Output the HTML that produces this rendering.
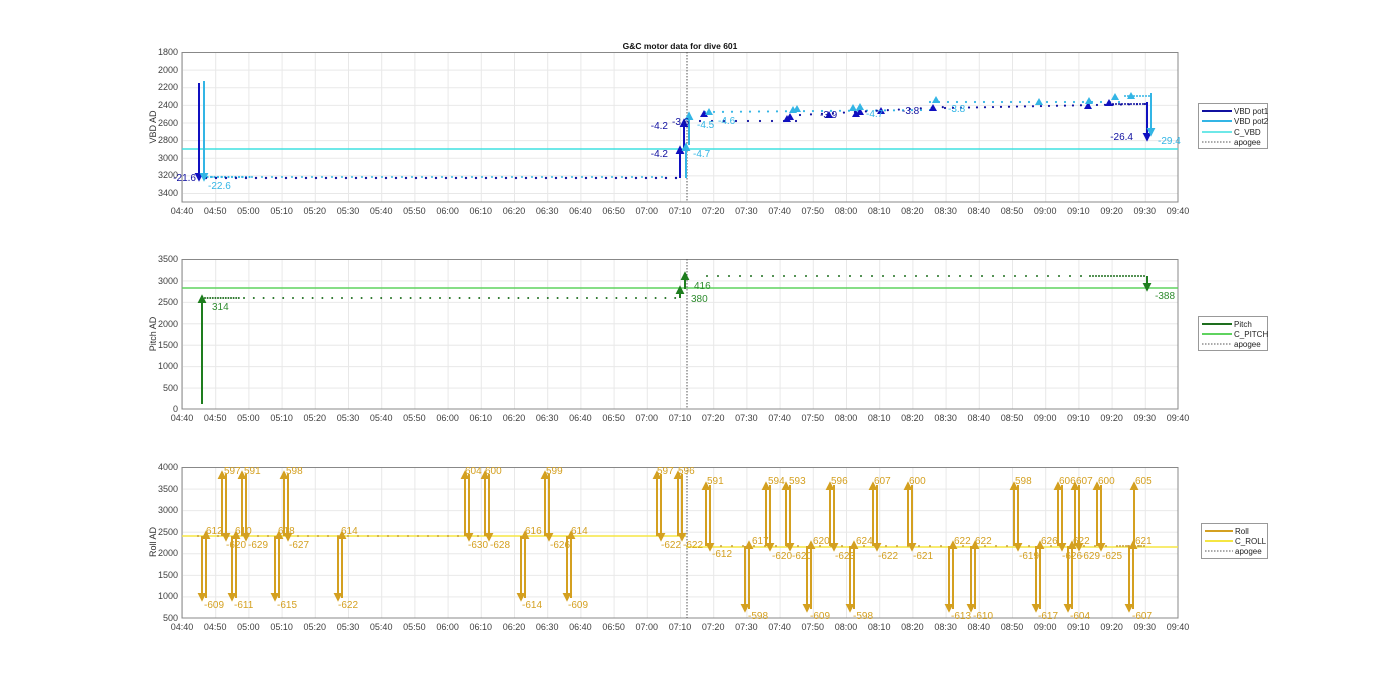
<!DOCTYPE html>
<html><head><meta charset="utf-8"><style>
html,body{margin:0;padding:0;background:#fff;}
svg{display:block;font-family:"Liberation Sans",Arial,sans-serif;}
.tk{font-size:9px;fill:#404040;}
.lg{font-size:8px;fill:#222;}
</style></head><body>
<svg width="1400" height="693" viewBox="0 0 1400 693" xmlns="http://www.w3.org/2000/svg">
<defs>
<pattern id="vg" x="182" y="0" width="33.2" height="700" patternUnits="userSpaceOnUse"><line x1="0.5" y1="0" x2="0.5" y2="700" stroke="#e8e8e8" stroke-width="1"/></pattern>
<pattern id="hg1" x="0" y="52" width="1400" height="17.625" patternUnits="userSpaceOnUse"><line x1="0" y1="0.5" x2="1400" y2="0.5" stroke="#e8e8e8"/></pattern>
<pattern id="hg2" x="0" y="409" width="1400" height="21.43" patternUnits="userSpaceOnUse"><line x1="0" y1="0.5" x2="1400" y2="0.5" stroke="#e8e8e8"/></pattern>
<pattern id="hg3" x="0" y="618" width="1400" height="21.57" patternUnits="userSpaceOnUse"><line x1="0" y1="0.5" x2="1400" y2="0.5" stroke="#e8e8e8"/></pattern>
<marker id="ab" viewBox="0 0 10 10" refX="5" refY="8" markerWidth="9" markerHeight="9" markerUnits="userSpaceOnUse" orient="auto"><path d="M0,0 L10,5 L0,10 z" transform="rotate(0)" fill="#1010c0"/></marker>
<marker id="ac" viewBox="0 0 10 10" refX="8" refY="5" markerWidth="9" markerHeight="9" markerUnits="userSpaceOnUse" orient="auto"><path d="M0,0 L10,5 L0,10 z" fill="#33b5e5"/></marker>
<marker id="ad" viewBox="0 0 10 10" refX="8" refY="5" markerWidth="9" markerHeight="9" markerUnits="userSpaceOnUse" orient="auto"><path d="M0,0 L10,5 L0,10 z" fill="#1010c0"/></marker>
<marker id="ag" viewBox="0 0 10 10" refX="8" refY="5" markerWidth="9" markerHeight="9" markerUnits="userSpaceOnUse" orient="auto"><path d="M0,0 L10,5 L0,10 z" fill="#1e7d1e"/></marker>
<marker id="ar" viewBox="0 0 10 10" refX="8" refY="5" markerWidth="9" markerHeight="9" markerUnits="userSpaceOnUse" orient="auto"><path d="M0,0 L10,5 L0,10 z" fill="#d4a020"/></marker>
</defs>

<text x="680" y="49" text-anchor="middle" font-size="8.5" font-weight="bold" fill="#111">G&amp;C motor data for dive 601</text>

<!-- ============ PLOT 1 ============ -->
<rect x="182" y="52" width="996" height="150" fill="url(#vg)"/>
<rect x="182" y="52" width="996" height="150" fill="url(#hg1)"/>
<rect x="182" y="52.5" width="996" height="149.5" fill="none" stroke="#888" stroke-width="1"/>
<g class="tk" text-anchor="end">
<text x="178" y="55">1800</text><text x="178" y="73">2000</text><text x="178" y="90">2200</text><text x="178" y="108">2400</text><text x="178" y="126">2600</text><text x="178" y="143">2800</text><text x="178" y="161">3000</text><text x="178" y="178">3200</text><text x="178" y="196">3400</text>
</g>
<text transform="translate(156,127) rotate(-90)" text-anchor="middle" font-size="9" fill="#333">VBD AD</text>
<g class="tk" text-anchor="middle"><text y="214"><tspan x="182">04:40</tspan><tspan x="215.2">04:50</tspan><tspan x="248.4">05:00</tspan><tspan x="281.6">05:10</tspan><tspan x="314.8">05:20</tspan><tspan x="348">05:30</tspan><tspan x="381.2">05:40</tspan><tspan x="414.4">05:50</tspan><tspan x="447.6">06:00</tspan><tspan x="480.8">06:10</tspan><tspan x="514">06:20</tspan><tspan x="547.2">06:30</tspan><tspan x="580.4">06:40</tspan><tspan x="613.6">06:50</tspan><tspan x="646.8">07:00</tspan><tspan x="680">07:10</tspan><tspan x="713.2">07:20</tspan><tspan x="746.4">07:30</tspan><tspan x="779.6">07:40</tspan><tspan x="812.8">07:50</tspan><tspan x="846">08:00</tspan><tspan x="879.2">08:10</tspan><tspan x="912.4">08:20</tspan><tspan x="945.6">08:30</tspan><tspan x="978.8">08:40</tspan><tspan x="1012">08:50</tspan><tspan x="1045.2">09:00</tspan><tspan x="1078.4">09:10</tspan><tspan x="1111.6">09:20</tspan><tspan x="1144.8">09:30</tspan><tspan x="1178">09:40</tspan></text></g>
<line x1="182" y1="149" x2="1178" y2="149" stroke="#3ee0e0" stroke-width="1.6"/>
<line x1="687" y1="52" x2="687" y2="202" stroke="#555" stroke-width="1" stroke-dasharray="1.5,1.5"/>
<!-- dots -->
<line x1="204" y1="177" x2="250" y2="177" stroke="#33b5e5" stroke-width="2.2" stroke-dasharray="0 3.5" stroke-linecap="round"/>
<line x1="206" y1="178" x2="680" y2="178" stroke="#1010a0" stroke-width="2.4" stroke-dasharray="0 10" stroke-linecap="round"/>
<line x1="212" y1="177" x2="670" y2="177" stroke="#33b5e5" stroke-width="2" stroke-dasharray="0 10" stroke-linecap="round"/>
<line x1="700" y1="121" x2="800" y2="121" stroke="#1010a0" stroke-width="2.2" stroke-dasharray="0 12" stroke-linecap="round"/>
<line x1="705" y1="112" x2="930" y2="110" stroke="#33b5e5" stroke-width="2.2" stroke-dasharray="0 9" stroke-linecap="round"/>
<line x1="800" y1="115" x2="945" y2="107" stroke="#1010a0" stroke-width="2.2" stroke-dasharray="0 11" stroke-linecap="round"/>
<line x1="930" y1="102" x2="1125" y2="102" stroke="#33b5e5" stroke-width="2.2" stroke-dasharray="0 9" stroke-linecap="round"/>
<line x1="945" y1="108" x2="1145" y2="104" stroke="#1010a0" stroke-width="2.2" stroke-dasharray="0 8" stroke-linecap="round"/>
<line x1="1110" y1="104" x2="1145" y2="104" stroke="#1010a0" stroke-width="2" stroke-dasharray="0 3" stroke-linecap="round"/>
<line x1="1125" y1="96" x2="1150" y2="96" stroke="#33b5e5" stroke-width="2" stroke-dasharray="0 3" stroke-linecap="round"/>
<!-- triangles -->
<g fill="#1010c0"><path d="M700,117l4,-7l4,7z"/><path d="M783,122l4,-7l4,7z"/><path d="M786,120l4,-7l4,7z"/><path d="M825,118l4,-7l4,7z"/><path d="M852,117l4,-7l4,7z"/><path d="M856,115l4,-7l4,7z"/><path d="M877,114l4,-7l4,7z"/><path d="M929,111l4,-7l4,7z"/><path d="M1084,109l4,-7l4,7z"/><path d="M1105,106l4,-7l4,7z"/></g>
<g fill="#33b5e5"><path d="M705,115l4,-7l4,7z"/><path d="M789,113l4,-7l4,7z"/><path d="M793,112l4,-7l4,7z"/><path d="M849,111l4,-7l4,7z"/><path d="M856,110l4,-7l4,7z"/><path d="M932,103l4,-7l4,7z"/><path d="M1035,105l4,-7l4,7z"/><path d="M1085,104l4,-7l4,7z"/><path d="M1111,100l4,-7l4,7z"/><path d="M1127,99l4,-7l4,7z"/></g>
<!-- arrows -->
<line x1="199" y1="83" x2="199" y2="180" stroke="#1010c0" stroke-width="2" marker-end="url(#ad)"/>
<line x1="204" y1="81" x2="204" y2="180" stroke="#33b5e5" stroke-width="2" marker-end="url(#ac)"/>
<line x1="680" y1="178" x2="680" y2="147" stroke="#1010c0" stroke-width="2" marker-end="url(#ad)"/>
<line x1="684" y1="148" x2="684" y2="120" stroke="#1010c0" stroke-width="2" marker-end="url(#ad)"/>
<line x1="686" y1="178" x2="686" y2="144" stroke="#33b5e5" stroke-width="2" marker-end="url(#ac)"/>
<line x1="689" y1="145" x2="689" y2="113" stroke="#33b5e5" stroke-width="2" marker-end="url(#ac)"/>
<line x1="1147" y1="102" x2="1147" y2="140" stroke="#1010c0" stroke-width="2" marker-end="url(#ad)"/>
<line x1="1151" y1="93" x2="1151" y2="135" stroke="#33b5e5" stroke-width="2" marker-end="url(#ac)"/>
<g font-size="10">
<text x="196" y="181" fill="#1010a0" text-anchor="end">-21.6</text>
<text x="208" y="189" fill="#33b5e5">-22.6</text>
<text x="668" y="157" fill="#1010a0" text-anchor="end">-4.2</text>
<text x="668" y="129" fill="#1010a0" text-anchor="end">-4.2</text>
<text x="672" y="125" fill="#1010a0">-3.6</text>
<text x="693" y="157" fill="#33b5e5">-4.7</text>
<text x="697" y="128" fill="#33b5e5">-4.5</text>
<text x="718" y="124" fill="#33b5e5">-4.6</text>
<text x="820" y="118" fill="#1010a0">-3.9</text>
<text x="866" y="117" fill="#33b5e5">-4.7</text>
<text x="902" y="114" fill="#1010a0">-3.8</text>
<text x="948" y="112" fill="#33b5e5">-3.8</text>
<text x="1133" y="140" fill="#1010a0" text-anchor="end">-26.4</text>
<text x="1158" y="144" fill="#33b5e5">-29.4</text>
</g>
<!-- legend 1 -->
<rect x="1198.5" y="103.5" width="69" height="45" fill="#fff" stroke="#999"/>
<line x1="1202" y1="111" x2="1232" y2="111" stroke="#1010a0" stroke-width="2"/><text class="lg" x="1234" y="114">VBD pot1</text>
<line x1="1202" y1="121" x2="1232" y2="121" stroke="#33b5e5" stroke-width="2"/><text class="lg" x="1234" y="124">VBD pot2</text>
<line x1="1202" y1="132" x2="1232" y2="132" stroke="#3ee0e0" stroke-width="1.5"/><text class="lg" x="1234" y="135">C_VBD</text>
<line x1="1202" y1="142" x2="1232" y2="142" stroke="#555" stroke-dasharray="1.5,1.5"/><text class="lg" x="1234" y="145">apogee</text>

<!-- ============ PLOT 2 ============ -->
<rect x="182" y="259" width="996" height="150" fill="url(#vg)"/>
<rect x="182" y="259" width="996" height="150" fill="url(#hg2)"/>
<rect x="182" y="259.5" width="996" height="149.5" fill="none" stroke="#888"/>
<g class="tk" text-anchor="end">
<text x="178" y="262">3500</text><text x="178" y="284">3000</text><text x="178" y="305">2500</text><text x="178" y="327">2000</text><text x="178" y="348">1500</text><text x="178" y="369">1000</text><text x="178" y="391">500</text><text x="178" y="412">0</text>
</g>
<text transform="translate(156,334) rotate(-90)" text-anchor="middle" font-size="9" fill="#333">Pitch AD</text>
<g class="tk" text-anchor="middle"><text y="421"><tspan x="182">04:40</tspan><tspan x="215.2">04:50</tspan><tspan x="248.4">05:00</tspan><tspan x="281.6">05:10</tspan><tspan x="314.8">05:20</tspan><tspan x="348">05:30</tspan><tspan x="381.2">05:40</tspan><tspan x="414.4">05:50</tspan><tspan x="447.6">06:00</tspan><tspan x="480.8">06:10</tspan><tspan x="514">06:20</tspan><tspan x="547.2">06:30</tspan><tspan x="580.4">06:40</tspan><tspan x="613.6">06:50</tspan><tspan x="646.8">07:00</tspan><tspan x="680">07:10</tspan><tspan x="713.2">07:20</tspan><tspan x="746.4">07:30</tspan><tspan x="779.6">07:40</tspan><tspan x="812.8">07:50</tspan><tspan x="846">08:00</tspan><tspan x="879.2">08:10</tspan><tspan x="912.4">08:20</tspan><tspan x="945.6">08:30</tspan><tspan x="978.8">08:40</tspan><tspan x="1012">08:50</tspan><tspan x="1045.2">09:00</tspan><tspan x="1078.4">09:10</tspan><tspan x="1111.6">09:20</tspan><tspan x="1144.8">09:30</tspan><tspan x="1178">09:40</tspan></text></g>
<line x1="182" y1="288" x2="1178" y2="288" stroke="#5fd35f" stroke-width="1.6"/>
<line x1="687" y1="259" x2="687" y2="409" stroke="#555" stroke-dasharray="1.5,1.5"/>
<line x1="205" y1="298" x2="240" y2="298" stroke="#1e6e1e" stroke-width="2" stroke-dasharray="0 2.6" stroke-linecap="round"/>
<line x1="244" y1="298" x2="680" y2="298" stroke="#1e6e1e" stroke-width="2" stroke-dasharray="0 9.8" stroke-linecap="round"/>
<line x1="707" y1="276" x2="1090" y2="276" stroke="#1e6e1e" stroke-width="2" stroke-dasharray="0 11" stroke-linecap="round"/>
<line x1="1090" y1="276" x2="1146" y2="276" stroke="#1e6e1e" stroke-width="2" stroke-dasharray="0 3" stroke-linecap="round"/>
<line x1="202" y1="404" x2="202" y2="296" stroke="#1e7d1e" stroke-width="2" marker-end="url(#ag)"/>
<line x1="680" y1="298" x2="680" y2="287" stroke="#1e7d1e" stroke-width="2" marker-end="url(#ag)"/>
<line x1="685" y1="289" x2="685" y2="273" stroke="#1e7d1e" stroke-width="2" marker-end="url(#ag)"/>
<line x1="1147" y1="276" x2="1147" y2="290" stroke="#1e7d1e" stroke-width="2" marker-end="url(#ag)"/>
<g font-size="10" fill="#2e8b2e">
<text x="212" y="310">314</text><text x="691" y="302">380</text><text x="694" y="289">416</text><text x="1155" y="299">-388</text>
</g>
<rect x="1198.5" y="316.5" width="69" height="34" fill="#fff" stroke="#999"/>
<line x1="1202" y1="324" x2="1232" y2="324" stroke="#1e6e1e" stroke-width="2"/><text class="lg" x="1234" y="327">Pitch</text>
<line x1="1202" y1="334" x2="1232" y2="334" stroke="#5fd35f" stroke-width="2"/><text class="lg" x="1234" y="337">C_PITCH</text>
<line x1="1202" y1="344" x2="1232" y2="344" stroke="#555" stroke-dasharray="1.5,1.5"/><text class="lg" x="1234" y="347">apogee</text>

<!-- ============ PLOT 3 ============ -->
<rect x="182" y="467" width="996" height="151" fill="url(#vg)"/>
<rect x="182" y="467" width="996" height="151" fill="url(#hg3)"/>
<rect x="182" y="467.5" width="996" height="150.5" fill="none" stroke="#888"/>
<g class="tk" text-anchor="end">
<text x="178" y="470">4000</text><text x="178" y="492">3500</text><text x="178" y="513">3000</text><text x="178" y="535">2500</text><text x="178" y="556">2000</text><text x="178" y="578">1500</text><text x="178" y="599">1000</text><text x="178" y="621">500</text>
</g>
<text transform="translate(156,542) rotate(-90)" text-anchor="middle" font-size="9" fill="#333">Roll AD</text>
<g class="tk" text-anchor="middle"><text y="630"><tspan x="182">04:40</tspan><tspan x="215.2">04:50</tspan><tspan x="248.4">05:00</tspan><tspan x="281.6">05:10</tspan><tspan x="314.8">05:20</tspan><tspan x="348">05:30</tspan><tspan x="381.2">05:40</tspan><tspan x="414.4">05:50</tspan><tspan x="447.6">06:00</tspan><tspan x="480.8">06:10</tspan><tspan x="514">06:20</tspan><tspan x="547.2">06:30</tspan><tspan x="580.4">06:40</tspan><tspan x="613.6">06:50</tspan><tspan x="646.8">07:00</tspan><tspan x="680">07:10</tspan><tspan x="713.2">07:20</tspan><tspan x="746.4">07:30</tspan><tspan x="779.6">07:40</tspan><tspan x="812.8">07:50</tspan><tspan x="846">08:00</tspan><tspan x="879.2">08:10</tspan><tspan x="912.4">08:20</tspan><tspan x="945.6">08:30</tspan><tspan x="978.8">08:40</tspan><tspan x="1012">08:50</tspan><tspan x="1045.2">09:00</tspan><tspan x="1078.4">09:10</tspan><tspan x="1111.6">09:20</tspan><tspan x="1144.8">09:30</tspan><tspan x="1178">09:40</tspan></text></g>
<line x1="182" y1="536" x2="686" y2="536" stroke="#f5e642" stroke-width="1.6"/>
<line x1="686" y1="547" x2="1178" y2="547" stroke="#f5e642" stroke-width="1.6"/>
<line x1="687" y1="467" x2="687" y2="618" stroke="#555" stroke-dasharray="1.5,1.5"/>
<line x1="198" y1="536" x2="480" y2="536" stroke="#c8a040" stroke-width="2" stroke-dasharray="0 10" stroke-linecap="round"/>
<line x1="710" y1="546" x2="1140" y2="546" stroke="#c8a040" stroke-width="2" stroke-dasharray="0 11" stroke-linecap="round"/>
<line x1="1120" y1="546" x2="1146" y2="546" stroke="#c8a040" stroke-width="2" stroke-dasharray="0 3" stroke-linecap="round"/>
<g stroke="#d4a020" stroke-width="2" fill="none">
<!-- up events (left line up, right line down) -->
<line x1="222" y1="536" x2="222" y2="472" marker-end="url(#ar)"/><line x1="226" y1="474" x2="226" y2="540" marker-end="url(#ar)"/>
<line x1="242" y1="536" x2="242" y2="472" marker-end="url(#ar)"/><line x1="246" y1="474" x2="246" y2="540" marker-end="url(#ar)"/>
<line x1="284" y1="536" x2="284" y2="472" marker-end="url(#ar)"/><line x1="288" y1="474" x2="288" y2="540" marker-end="url(#ar)"/>
<line x1="465" y1="536" x2="465" y2="472" marker-end="url(#ar)"/><line x1="469" y1="474" x2="469" y2="540" marker-end="url(#ar)"/>
<line x1="485" y1="536" x2="485" y2="472" marker-end="url(#ar)"/><line x1="489" y1="474" x2="489" y2="540" marker-end="url(#ar)"/>
<line x1="545" y1="536" x2="545" y2="472" marker-end="url(#ar)"/><line x1="549" y1="474" x2="549" y2="540" marker-end="url(#ar)"/>
<line x1="657" y1="536" x2="657" y2="472" marker-end="url(#ar)"/><line x1="661" y1="474" x2="661" y2="540" marker-end="url(#ar)"/>
<line x1="678" y1="536" x2="678" y2="472" marker-end="url(#ar)"/><line x1="682" y1="474" x2="682" y2="540" marker-end="url(#ar)"/>
<line x1="706" y1="546" x2="706" y2="483" marker-end="url(#ar)"/><line x1="710" y1="485" x2="710" y2="550" marker-end="url(#ar)"/>
<line x1="766" y1="546" x2="766" y2="483" marker-end="url(#ar)"/><line x1="770" y1="485" x2="770" y2="550" marker-end="url(#ar)"/>
<line x1="786" y1="546" x2="786" y2="483" marker-end="url(#ar)"/><line x1="790" y1="485" x2="790" y2="550" marker-end="url(#ar)"/>
<line x1="830" y1="546" x2="830" y2="483" marker-end="url(#ar)"/><line x1="834" y1="485" x2="834" y2="550" marker-end="url(#ar)"/>
<line x1="873" y1="546" x2="873" y2="483" marker-end="url(#ar)"/><line x1="877" y1="485" x2="877" y2="550" marker-end="url(#ar)"/>
<line x1="908" y1="546" x2="908" y2="483" marker-end="url(#ar)"/><line x1="912" y1="485" x2="912" y2="550" marker-end="url(#ar)"/>
<line x1="1014" y1="546" x2="1014" y2="483" marker-end="url(#ar)"/><line x1="1018" y1="485" x2="1018" y2="550" marker-end="url(#ar)"/>
<line x1="1058" y1="546" x2="1058" y2="483" marker-end="url(#ar)"/><line x1="1062" y1="485" x2="1062" y2="550" marker-end="url(#ar)"/>
<line x1="1075" y1="546" x2="1075" y2="483" marker-end="url(#ar)"/><line x1="1079" y1="485" x2="1079" y2="550" marker-end="url(#ar)"/>
<line x1="1097" y1="546" x2="1097" y2="483" marker-end="url(#ar)"/><line x1="1101" y1="485" x2="1101" y2="550" marker-end="url(#ar)"/>
<line x1="1134" y1="546" x2="1134" y2="483" marker-end="url(#ar)"/>
<!-- down events (left line down, right line up) -->
<line x1="202" y1="536" x2="202" y2="600" marker-end="url(#ar)"/><line x1="206" y1="598" x2="206" y2="532" marker-end="url(#ar)"/>
<line x1="232" y1="536" x2="232" y2="600" marker-end="url(#ar)"/><line x1="236" y1="598" x2="236" y2="532" marker-end="url(#ar)"/>
<line x1="275" y1="536" x2="275" y2="600" marker-end="url(#ar)"/><line x1="279" y1="598" x2="279" y2="532" marker-end="url(#ar)"/>
<line x1="338" y1="536" x2="338" y2="600" marker-end="url(#ar)"/><line x1="342" y1="598" x2="342" y2="532" marker-end="url(#ar)"/>
<line x1="521" y1="536" x2="521" y2="600" marker-end="url(#ar)"/><line x1="525" y1="598" x2="525" y2="532" marker-end="url(#ar)"/>
<line x1="567" y1="536" x2="567" y2="600" marker-end="url(#ar)"/><line x1="571" y1="598" x2="571" y2="532" marker-end="url(#ar)"/>
<line x1="745" y1="546" x2="745" y2="611" marker-end="url(#ar)"/><line x1="749" y1="609" x2="749" y2="542" marker-end="url(#ar)"/>
<line x1="807" y1="546" x2="807" y2="611" marker-end="url(#ar)"/><line x1="811" y1="609" x2="811" y2="542" marker-end="url(#ar)"/>
<line x1="850" y1="546" x2="850" y2="611" marker-end="url(#ar)"/><line x1="854" y1="609" x2="854" y2="542" marker-end="url(#ar)"/>
<line x1="949" y1="546" x2="949" y2="611" marker-end="url(#ar)"/><line x1="953" y1="609" x2="953" y2="542" marker-end="url(#ar)"/>
<line x1="971" y1="546" x2="971" y2="611" marker-end="url(#ar)"/><line x1="975" y1="609" x2="975" y2="542" marker-end="url(#ar)"/>
<line x1="1036" y1="546" x2="1036" y2="611" marker-end="url(#ar)"/><line x1="1040" y1="609" x2="1040" y2="542" marker-end="url(#ar)"/>
<line x1="1068" y1="546" x2="1068" y2="611" marker-end="url(#ar)"/><line x1="1072" y1="609" x2="1072" y2="542" marker-end="url(#ar)"/>
<line x1="1129" y1="546" x2="1129" y2="611" marker-end="url(#ar)"/><line x1="1133" y1="609" x2="1133" y2="542" marker-end="url(#ar)"/>
</g>
<g font-size="10" fill="#d4a020">
<text x="206" y="534">612</text><text x="204" y="608">-609</text>
<text x="224" y="474">597</text><text x="244" y="474">591</text><text x="226" y="548">-620</text><text x="248" y="548">-629</text>
<text x="235" y="534">610</text><text x="234" y="608">-611</text>
<text x="278" y="534">618</text><text x="277" y="608">-615</text>
<text x="286" y="474">598</text><text x="289" y="548">-627</text>
<text x="341" y="534">614</text><text x="338" y="608">-622</text>
<text x="465" y="474">604</text><text x="485" y="474">600</text><text x="468" y="548">-630</text><text x="490" y="548">-628</text>
<text x="525" y="534">616</text><text x="522" y="608">-614</text>
<text x="546" y="474">599</text><text x="550" y="548">-626</text>
<text x="571" y="534">614</text><text x="568" y="608">-609</text>
<text x="657" y="474">597</text><text x="678" y="474">596</text><text x="661" y="548">-622</text><text x="683" y="548">-622</text>
<text x="707" y="484">591</text><text x="712" y="557">-612</text>
<text x="752" y="544">617</text><text x="748" y="619">-598</text>
<text x="768" y="484">594</text><text x="789" y="484">593</text><text x="772" y="559">-620</text><text x="792" y="559">-620</text>
<text x="813" y="544">620</text><text x="810" y="619">-609</text>
<text x="831" y="484">596</text><text x="835" y="559">-623</text>
<text x="856" y="544">624</text><text x="853" y="619">-598</text>
<text x="874" y="484">607</text><text x="878" y="559">-622</text>
<text x="909" y="484">600</text><text x="913" y="559">-621</text>
<text x="954" y="544">622</text><text x="951" y="619">-613</text>
<text x="975" y="544">622</text><text x="973" y="619">-610</text>
<text x="1015" y="484">598</text><text x="1019" y="559">-619</text>
<text x="1041" y="544">626</text><text x="1038" y="619">-617</text>
<text x="1059" y="484">606</text><text x="1076" y="484">607</text><text x="1062" y="559">-626</text><text x="1080" y="559">-629</text>
<text x="1073" y="544">622</text><text x="1070" y="619">-604</text>
<text x="1098" y="484">600</text><text x="1102" y="559">-625</text>
<text x="1135" y="544">621</text><text x="1132" y="619">-607</text>
<text x="1135" y="484">605</text>
</g>
<rect x="1201.5" y="523.5" width="66" height="35" fill="#fff" stroke="#999"/>
<line x1="1205" y1="531" x2="1233" y2="531" stroke="#d4a020" stroke-width="2"/><text class="lg" x="1235" y="534">Roll</text>
<line x1="1205" y1="541" x2="1233" y2="541" stroke="#f5e642" stroke-width="2"/><text class="lg" x="1235" y="544">C_ROLL</text>
<line x1="1205" y1="551" x2="1233" y2="551" stroke="#555" stroke-dasharray="1.5,1.5"/><text class="lg" x="1235" y="554">apogee</text>
</svg>
</body></html>
